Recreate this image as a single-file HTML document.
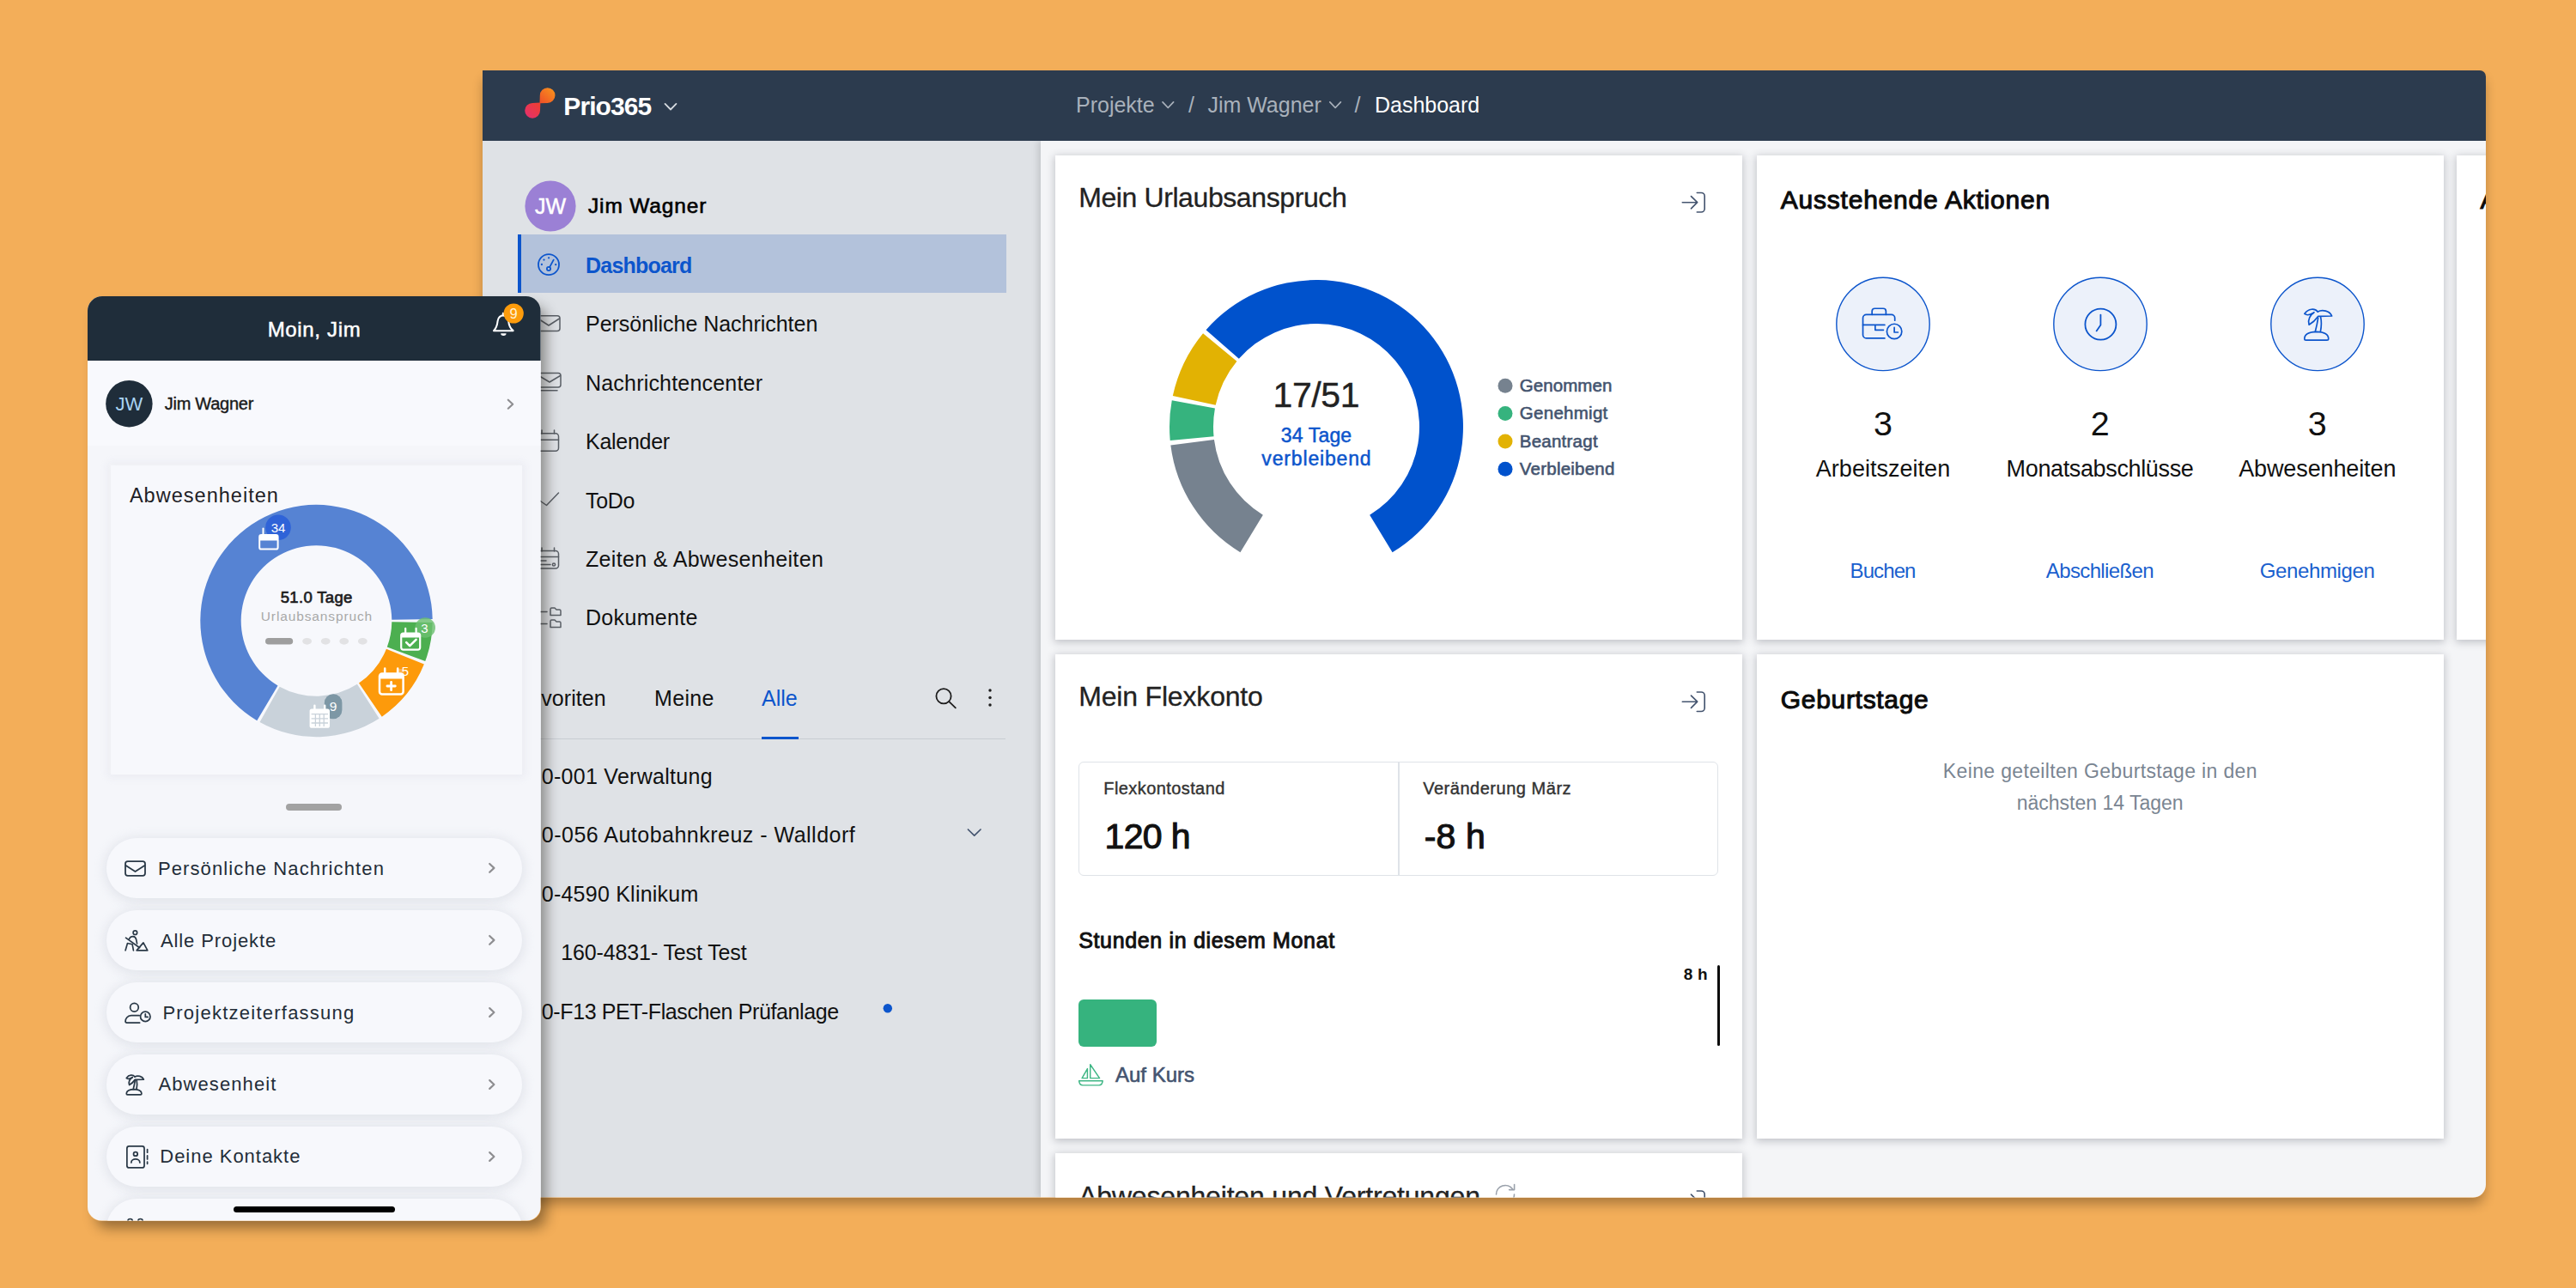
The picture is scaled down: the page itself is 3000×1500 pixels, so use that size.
<!DOCTYPE html>
<html lang="de"><head><meta charset="utf-8"><title>Prio365 Dashboard</title>
<style>
html,body{margin:0;padding:0}
body{width:3000px;height:1500px;overflow:hidden;position:relative;background:#f3ae59;font-family:"Liberation Sans",sans-serif}
.abs,.t,.layer,svg.ov{position:absolute}
.t{white-space:nowrap;line-height:1;display:block}
.layer{left:0;top:0;width:3000px;height:1500px}
svg.ov{left:0;top:0;width:3000px;height:1500px;overflow:visible}
#winshadow{left:562px;top:82px;width:2333px;height:1312.6px;border-radius:0 7px 15px 0;box-shadow:0 9px 14px -2px rgba(20,10,0,.32)}
#win{clip-path:inset(82px 105px 105.4px 562px round 0 7px 15px 0)}
#topbar{left:562px;top:82px;width:2333px;height:81.5px;background:#2c3b4e}
#side{left:562px;top:163.5px;width:650px;height:1231px;background:#dfe2e6}
#content{left:1212px;top:163.5px;width:1683px;height:1231px;background:#f4f5f7;box-shadow:-3px 0 8px rgba(0,0,0,.13)}
.card{background:#fff;box-shadow:0 2px 9px 1px rgba(40,45,58,.25)}
#sel{left:603px;top:273px;width:569px;height:68px;background:#b3c2db;border-left:4px solid #0c55cc;box-sizing:border-box}
#phoneshadow{left:102px;top:345px;width:527.6px;height:1076.5px;border-radius:17px 17px 16px 16px;box-shadow:8px 10px 15px -2px rgba(20,15,5,.42)}
#phone{clip-path:inset(345px 2370.4px 78.5px 102px round 17px 17px 16px 16px)}
#pbg{left:102px;top:345px;width:528px;height:1077px;background:#f5f6fa}
#phead{left:102px;top:345px;width:528px;height:75px;background:#1f2d3a}
#puser{left:102px;top:420px;width:528px;height:99px;background:#f8f9fd}
#pcard{left:128.5px;top:542.2px;width:479.5px;height:359.6px;background:#f7f8fc;box-shadow:0 0 9px 3px rgba(226,228,236,.6),-1px -1px 3px rgba(255,255,255,.8)}
.pill{left:124px;width:483.5px;height:70.6px;border-radius:36px;background:#f7f8fc;box-shadow:0 2px 12px 3px rgba(203,207,218,.42)}
</style></head>
<body>
<div class="abs" id="winshadow"></div>
<div class="layer" id="win">
  <div class="abs" id="side"></div>
  <div class="abs" id="content"></div>
  <div class="abs" id="topbar"></div>
  <div class="abs" id="sel"></div>
  <div class="abs" style="left:629px;top:859.5px;width:542px;height:1.5px;background:#c9cdd3"></div>
  <div class="abs" style="left:886.5px;top:857.5px;width:43px;height:3.5px;background:#0c55cc"></div>
  <div class="abs card" style="left:1229px;top:180.5px;width:800px;height:564px"></div>
  <div class="abs card" style="left:2046px;top:180.5px;width:800px;height:564px"></div>
  <div class="abs card" style="left:2860.8px;top:180.5px;width:800px;height:564px"></div>
  <div class="abs card" style="left:1229px;top:762px;width:800px;height:563.5px"></div>
  <div class="abs card" style="left:2046px;top:762px;width:800px;height:563.5px"></div>
  <div class="abs card" style="left:1229px;top:1343px;width:800px;height:300px"></div>
  <div class="abs" style="left:1256px;top:886.8px;width:745px;height:133px;border:1.5px solid #dfe3e8;border-radius:6px;box-sizing:border-box"></div>
  <div class="abs" style="left:1628.3px;top:887.5px;width:1.5px;height:131.5px;background:#dfe3e8"></div>
  <div class="abs" style="left:1256px;top:1164px;width:90.5px;height:54.5px;border-radius:6px;background:#36b37e"></div>
  <div class="abs" style="left:1999.8px;top:1123.5px;width:3px;height:94px;border-radius:1.5px;background:#0a0a0a"></div>
<svg class="ov" viewBox="0 0 3000 1500" fill="none" stroke-linecap="round" stroke-linejoin="round">
<defs><linearGradient id="lg1" gradientUnits="userSpaceOnUse" x1="645" y1="103" x2="629" y2="120"><stop offset="0" stop-color="#f8931d"/><stop offset="1" stop-color="#ef4f27"/></linearGradient><linearGradient id="lg2" gradientUnits="userSpaceOnUse" x1="629" y1="120" x2="612" y2="137"><stop offset="0" stop-color="#ef3f2e"/><stop offset="1" stop-color="#e42f70"/></linearGradient></defs>
<path d="M628.5,120.3 L628.8,111.05 A8.85,8.85 0 1 1 637.65,119.9 Z" fill="url(#lg1)"/>
<path d="M629.4,119.5 L629,128.8 A8.9,8.9 0 1 1 620.1,119.9 Z" fill="url(#lg2)"/>
<path d="M774.5,120.9 L781.0,127.5 L787.5,120.9" stroke="#d5dae0" stroke-width="1.8"/>
<path d="M1354.0,118.9 L1360.3,125.5 L1366.6,118.9" stroke="#a9b1bb" stroke-width="1.7"/>
<path d="M1548.8,118.9 L1555.1,125.5 L1561.4,118.9" stroke="#a9b1bb" stroke-width="1.7"/>
<circle cx="641" cy="240" r="29.6" fill="#9b80d5"/>
<g stroke="#0c55cc" stroke-width="1.8"><circle cx="639" cy="308.2" r="12"/><circle cx="639" cy="313" r="2.1"/><path d="M640.1,311.1 L644.7,302.6"/></g>
<circle cx="630.9" cy="308" r="1.15" fill="#0c55cc"/>
<circle cx="633.5" cy="302.6" r="1.15" fill="#0c55cc"/>
<circle cx="639.1" cy="300.3" r="1.15" fill="#0c55cc"/>
<circle cx="647.2" cy="308.2" r="1.15" fill="#0c55cc"/>
<g stroke="#5a5f66" stroke-width="1.5">
<rect x="626" y="367.8" width="26" height="17.8" rx="3"/><path d="M626.5,371 L639,379 L651.5,371"/>
<rect x="627" y="434.6" width="26" height="16.3" rx="3"/><path d="M627.5,437.5 L640,445 L652.5,437.5"/><path d="M629,454.8 H649"/>
<rect x="625.5" y="504.7" width="25" height="20.5" rx="3.5"/><path d="M625.5,512.2 H650.5 M631,501 V505 M645.5,501 V505"/>
<path d="M625,580.5 L636.5,588.5 L650.5,574.1"/>
<rect x="625.5" y="641.5" width="25" height="20.6" rx="3.5"/><path d="M625.5,648.5 H650.5 M631,638 V642 M645.5,638 V642 M629,653 H636 M629,657.5 H641"/><circle cx="645" cy="657.5" r="1.6"/>
<path d="M641,716.5 V709.5 a1.5,1.5 0 0 1 1.5,-1.5 H646 l2,2 H651.5 a1.5,1.5 0 0 1 1.5,1.5 V716.5 Z"/>
<path d="M641,730.5 V723.5 a1.5,1.5 0 0 1 1.5,-1.5 H646 l2,2 H651.5 a1.5,1.5 0 0 1 1.5,1.5 V730.5 Z"/>
<path d="M626,712.5 H637 M626,726.5 H637"/>
</g>
<g stroke="#1d1d1d" stroke-width="1.8"><circle cx="1099" cy="810.8" r="8.6"/><path d="M1105.3,817.2 L1112.8,824.4"/></g>
<circle cx="1153" cy="804" r="1.75" fill="#1d1d1d"/>
<circle cx="1153" cy="812.5" r="1.75" fill="#1d1d1d"/>
<circle cx="1153" cy="821" r="1.75" fill="#1d1d1d"/>
<path d="M1127.4,966.0 L1134.7,973.2 L1142.0,966.0" stroke="#44546f" stroke-width="1.7"/>
<circle cx="1033.8" cy="1174.3" r="5.2" fill="#0c55cc"/>
<g transform="translate(0,0)" stroke="#44546f" stroke-width="1.65"><path d="M1959.3,235.7 H1976.3 M1969.5,228.6 L1976.7,235.7 L1969.5,242.8"/><path d="M1976.3,224.5 H1981.2 a4,4 0 0 1 4,4 V243 a4,4 0 0 1 -4,4 H1976.3"/></g>
<g transform="translate(0,581.5)" stroke="#44546f" stroke-width="1.65"><path d="M1959.3,235.7 H1976.3 M1969.5,228.6 L1976.7,235.7 L1969.5,242.8"/><path d="M1976.3,224.5 H1981.2 a4,4 0 0 1 4,4 V243 a4,4 0 0 1 -4,4 H1976.3"/></g>
<g transform="translate(0,1162.5)" stroke="#44546f" stroke-width="1.65"><path d="M1959.3,235.7 H1976.3 M1969.5,228.6 L1976.7,235.7 L1969.5,242.8"/><path d="M1976.3,224.5 H1981.2 a4,4 0 0 1 4,4 V243 a4,4 0 0 1 -4,4 H1976.3"/></g>
<path d="M1444.42,643.27 A171.0,171.0 0 0 1 1363.34,518.38 L1413.94,512.00 A120.0,120.0 0 0 0 1470.84,599.64 Z" fill="#76828f"/>
<path d="M1362.75,513.04 A171.0,171.0 0 0 1 1364.77,466.36 L1414.94,475.50 A120.0,120.0 0 0 0 1413.53,508.26 Z" fill="#36b37e"/>
<path d="M1365.81,461.09 A171.0,171.0 0 0 1 1401.05,388.23 L1440.41,420.67 A120.0,120.0 0 0 0 1415.68,471.80 Z" fill="#e2b203"/>
<path d="M1404.53,384.14 A171.0,171.0 0 1 1 1621.58,643.27 L1595.16,599.64 A120.0,120.0 0 1 0 1442.85,417.80 Z" fill="#0052cc"/>
<circle cx="1753" cy="449.3" r="8.5" fill="#76828f"/>
<circle cx="1753" cy="481.6" r="8.5" fill="#36b37e"/>
<circle cx="1753" cy="513.9" r="8.5" fill="#e2b203"/>
<circle cx="1753" cy="546.2" r="8.5" fill="#0052cc"/>
<circle cx="2193" cy="377.4" r="54.2" fill="#ecf1fa" stroke="#0c55cc" stroke-width="1.4"/>
<circle cx="2446" cy="377.4" r="54.2" fill="#ecf1fa" stroke="#0c55cc" stroke-width="1.4"/>
<circle cx="2699" cy="377.4" r="54.2" fill="#ecf1fa" stroke="#0c55cc" stroke-width="1.4"/>
<g transform="translate(2130,315) scale(0.14752)" stroke="#0c55cc" stroke-width="11.5">
<path d="M440,535 H295 a27,27 0 0 1 -27,-27 V375 a27,27 0 0 1 27,-27 H493 a27,27 0 0 1 27,27 V395"/>
<path d="M340,348 V322 a22,22 0 0 1 22,-22 H428 a22,22 0 0 1 22,22 V348"/>
<path d="M268,430 H440 M365,430 V470 H430"/>
<circle cx="516" cy="481" r="59"/><path d="M516,450 V488 H545"/>
</g>
<g stroke="#0c55cc" stroke-width="1.8"><circle cx="2446.4" cy="377.7" r="18"/><path d="M2446.4,366.6 V378.6 L2441.6,385.4"/></g>
<g transform="translate(2640,320) scale(0.09317)" stroke="#0c55cc" stroke-width="18">
<path d="M470,800 Q470,715 620,712 Q770,715 770,800 Q770,818 750,818 L490,818 Q470,818 470,800 Z"/>
<path d="M605,708 Q628,620 640,540 M670,708 Q690,610 672,528"/>
<path d="M636,462 C600,418 520,418 470,488 C500,512 540,502 580,478"/>
<path d="M590,470 C545,500 505,560 527,625 C570,600 612,560 640,520"/>
<path d="M636,462 C690,432 785,448 812,515 L650,520"/>
</g>
<g transform="translate(1240,1220) scale(0.06988)" stroke="#3fb685" stroke-width="21">
<path d="M425,283 L580,510 H425 Z M378,352 V510 H288 Z"/><path d="M238,556 H632 Q625,625 570,628 H300 Q245,625 238,556 Z"/>
</g>
<g stroke="#9aa1ab" stroke-width="1.6"><path d="M1742.5,1391 a10.5,10.5 0 0 1 19,-6.2"/><path d="M1763.6,1379.6 V1385.6 H1757.6"/><path d="M1763.5,1391 a10.5,10.5 0 0 1 -19,6.2"/></g>
</svg>
<span class="t" style="top:109.25px;font-size:30px;color:#fff;font-weight:700;letter-spacing:-0.918px;left:656.30px;">Prio365</span>
<span class="t" style="top:109.99px;font-size:25px;color:#a9b1bb;left:1253.00px;">Projekte</span>
<span class="t" style="top:109.99px;font-size:25px;color:#a9b1bb;left:1387.40px;transform:translateX(-50%);">/</span>
<span class="t" style="top:109.99px;font-size:25px;color:#a9b1bb;letter-spacing:-0.004px;left:1406.40px;">Jim Wagner</span>
<span class="t" style="top:109.99px;font-size:25px;color:#a9b1bb;left:1581.00px;transform:translateX(-50%);">/</span>
<span class="t" style="top:109.99px;font-size:25px;color:#fff;letter-spacing:-0.014px;left:1601.00px;">Dashboard</span>
<span class="t" style="top:228.49px;font-size:25px;color:#fff;-webkit-text-stroke:0.5px #fff;left:641.00px;transform:translateX(-50%);">JW</span>
<span class="t" style="top:228.03px;font-size:24.5px;color:#000;letter-spacing:0.845px;-webkit-text-stroke:0.6px #000;left:685.00px;">Jim Wagner</span>
<span class="t" style="top:296.69px;font-size:25px;color:#0c55cc;font-weight:700;letter-spacing:-0.787px;left:682.00px;">Dashboard</span>
<span class="t" style="top:364.99px;font-size:25px;color:#111;letter-spacing:-0.031px;left:682.00px;">Pers&ouml;nliche Nachrichten</span>
<span class="t" style="top:433.79px;font-size:25px;color:#111;letter-spacing:0.194px;left:682.00px;">Nachrichtencenter</span>
<span class="t" style="top:502.09px;font-size:25px;color:#111;letter-spacing:-0.268px;left:682.00px;">Kalender</span>
<span class="t" style="top:570.79px;font-size:25px;color:#111;letter-spacing:-0.292px;left:682.00px;">ToDo</span>
<span class="t" style="top:639.09px;font-size:25px;color:#111;letter-spacing:0.341px;left:682.00px;">Zeiten &amp; Abwesenheiten</span>
<span class="t" style="top:707.49px;font-size:25px;color:#111;letter-spacing:0.318px;left:682.00px;">Dokumente</span>
<span class="t" style="top:801.49px;font-size:25px;color:#111;letter-spacing:0.059px;left:630.30px;">voriten</span>
<span class="t" style="top:801.49px;font-size:25px;color:#111;letter-spacing:0.352px;left:762.00px;">Meine</span>
<span class="t" style="top:801.49px;font-size:25px;color:#0c55cc;letter-spacing:-0.029px;left:887.00px;">Alle</span>
<span class="t" style="top:892.19px;font-size:25px;color:#111;letter-spacing:0.280px;left:630.80px;">0-001 Verwaltung</span>
<span class="t" style="top:960.19px;font-size:25px;color:#111;letter-spacing:0.491px;left:630.80px;">0-056 Autobahnkreuz - Walldorf</span>
<span class="t" style="top:1029.29px;font-size:25px;color:#111;letter-spacing:0.231px;left:630.80px;">0-4590 Klinikum</span>
<span class="t" style="top:1097.19px;font-size:25px;color:#111;letter-spacing:-0.132px;left:653.30px;">160-4831- Test Test</span>
<span class="t" style="top:1165.89px;font-size:25px;color:#111;letter-spacing:-0.387px;left:630.80px;">0-F13 PET-Flaschen Pr&uuml;fanlage</span>
<span class="t" style="top:213.77px;font-size:32px;color:#222;letter-spacing:-0.403px;-webkit-text-stroke:0.3px #222;left:1256.20px;">Mein Urlaubsanspruch</span>
<span class="t" style="top:439.97px;font-size:41px;color:#222;letter-spacing:-0.402px;-webkit-text-stroke:0.4px #222;left:1532.80px;transform:translateX(-50%);">17/51</span>
<span class="t" style="top:495.96px;font-size:23px;color:#0c55cc;letter-spacing:0.144px;-webkit-text-stroke:0.5px #0c55cc;left:1533.07px;transform:translateX(-50%);">34 Tage</span>
<span class="t" style="top:523.16px;font-size:23px;color:#0c55cc;letter-spacing:0.838px;-webkit-text-stroke:0.5px #0c55cc;left:1533.42px;transform:translateX(-50%);">verbleibend</span>
<span class="t" style="top:438.99px;font-size:20.5px;color:#44546f;letter-spacing:0.056px;-webkit-text-stroke:0.6px #44546f;left:1769.80px;">Genommen</span>
<span class="t" style="top:471.39px;font-size:20.5px;color:#44546f;letter-spacing:0.277px;-webkit-text-stroke:0.6px #44546f;left:1769.80px;">Genehmigt</span>
<span class="t" style="top:503.59px;font-size:20.5px;color:#44546f;letter-spacing:0.237px;-webkit-text-stroke:0.6px #44546f;left:1769.80px;">Beantragt</span>
<span class="t" style="top:535.79px;font-size:20.5px;color:#44546f;letter-spacing:0.230px;-webkit-text-stroke:0.6px #44546f;left:1769.80px;">Verbleibend</span>
<span class="t" style="top:218.34px;font-size:30px;color:#0c0c0c;letter-spacing:0.775px;-webkit-text-stroke:1.05px #0c0c0c;left:2073.80px;">Ausstehende Aktionen</span>
<span class="t" style="top:474.10px;font-size:39.5px;color:#111;left:2193.00px;transform:translateX(-50%);">3</span>
<span class="t" style="top:474.10px;font-size:39.5px;color:#111;left:2445.70px;transform:translateX(-50%);">2</span>
<span class="t" style="top:474.10px;font-size:39.5px;color:#111;left:2698.80px;transform:translateX(-50%);">3</span>
<span class="t" style="top:532.61px;font-size:27px;color:#111;letter-spacing:0.026px;left:2193.01px;transform:translateX(-50%);">Arbeitszeiten</span>
<span class="t" style="top:532.61px;font-size:27px;color:#111;letter-spacing:-0.362px;left:2445.52px;transform:translateX(-50%);">Monatsabschl&uuml;sse</span>
<span class="t" style="top:532.61px;font-size:27px;color:#111;letter-spacing:-0.120px;left:2698.74px;transform:translateX(-50%);">Abwesenheiten</span>
<span class="t" style="top:653.28px;font-size:24px;color:#1a5fce;letter-spacing:-0.901px;left:2192.55px;transform:translateX(-50%);">Buchen</span>
<span class="t" style="top:653.28px;font-size:24px;color:#1a5fce;letter-spacing:-0.628px;left:2445.39px;transform:translateX(-50%);">Abschlie&szlig;en</span>
<span class="t" style="top:653.28px;font-size:24px;color:#1a5fce;letter-spacing:-0.393px;left:2698.60px;transform:translateX(-50%);">Genehmigen</span>
<span class="t" style="top:218.34px;font-size:30px;color:#0c0c0c;-webkit-text-stroke:1.05px #0c0c0c;left:2888.50px;">A</span>
<span class="t" style="top:795.27px;font-size:32px;color:#222;letter-spacing:-0.176px;-webkit-text-stroke:0.3px #222;left:1256.20px;">Mein Flexkonto</span>
<span class="t" style="top:907.53px;font-size:20px;color:#333;letter-spacing:0.412px;-webkit-text-stroke:0.4px #333;left:1285.30px;">Flexkontostand</span>
<span class="t" style="top:953.57px;font-size:41px;color:#111;letter-spacing:-0.652px;-webkit-text-stroke:1.1px #111;left:1286.50px;">120 h</span>
<span class="t" style="top:907.53px;font-size:20px;color:#333;letter-spacing:0.524px;-webkit-text-stroke:0.4px #333;left:1657.20px;">Ver&auml;nderung M&auml;rz</span>
<span class="t" style="top:953.57px;font-size:41px;color:#111;letter-spacing:0.115px;-webkit-text-stroke:1.1px #111;left:1658.80px;">-8 h</span>
<span class="t" style="top:1082.79px;font-size:25px;color:#111;letter-spacing:0.658px;-webkit-text-stroke:0.95px #111;left:1256.20px;">Stunden in diesem Monat</span>
<span class="t" style="top:1125.42px;font-size:19px;color:#111;font-weight:700;letter-spacing:0.273px;left:1988.97px;transform:translateX(-100%);">8 h</span>
<span class="t" style="top:1239.88px;font-size:24px;color:#44546f;letter-spacing:-0.007px;-webkit-text-stroke:0.6px #44546f;left:1299.00px;">Auf Kurs</span>
<span class="t" style="top:799.95px;font-size:30px;color:#0c0c0c;letter-spacing:0.689px;-webkit-text-stroke:1.05px #0c0c0c;left:2073.80px;">Geburtstage</span>
<span class="t" style="top:886.66px;font-size:23px;color:#7a8592;letter-spacing:0.348px;left:2445.87px;transform:translateX(-50%);">Keine geteilten Geburtstage in den</span>
<span class="t" style="top:923.56px;font-size:23px;color:#7a8592;left:2445.70px;transform:translateX(-50%);">n&auml;chsten 14 Tagen</span>
<span class="t" style="top:1376.67px;font-size:32px;color:#222;letter-spacing:-0.188px;-webkit-text-stroke:0.3px #222;left:1256.20px;">Abwesenheiten und Vertretungen</span>
</div>
<div class="abs" id="phoneshadow"></div>
<div class="layer" id="phone">
  <div class="abs" id="pbg"></div>
  <div class="abs" id="puser"></div>
  <div class="abs" id="phead"></div>
  <div class="abs" id="pcard"></div>
  <div class="abs" style="left:333.3px;top:935.6px;width:64.8px;height:8px;border-radius:4px;background:#a2a2a2"></div>
  <div class="abs pill" style="top:975.5px"></div>
  <div class="abs pill" style="top:1059.5px"></div>
  <div class="abs pill" style="top:1143.6px"></div>
  <div class="abs pill" style="top:1227.6px"></div>
  <div class="abs pill" style="top:1311.6px"></div>
  <div class="abs pill" style="top:1395.7px"></div>
  <div class="abs" style="left:271.7px;top:1405px;width:188.3px;height:6.5px;border-radius:3.5px;background:#000"></div>
<svg class="ov" viewBox="0 0 3000 1500" fill="none" stroke-linecap="round" stroke-linejoin="round">
<g transform="translate(550,345) scale(0.04658)" stroke="#fff" stroke-width="44"><path d="M537,862 C600,800 625,720 635,620 C645,520 720,480 770,480 C820,480 895,520 905,620 C915,720 940,800 1023,862 Z"/><path d="M770,478 V425"/><path d="M712,930 H850 A69,58 0 0 1 712,930 Z" fill="#fff" stroke="none"/></g>
<circle cx="598.2" cy="365" r="11.6" fill="#fd9c0c"/>
<circle cx="150.4" cy="470.2" r="27.2" fill="#1f2d3a"/>
<path d="M591.8,465.7 L597.2,470.7 L591.8,475.7" stroke="#8e8e91" stroke-width="2.2"/>
<path d="M503.69,724.89 A135.2,135.2 0 0 1 495.24,770.07 L450.81,753.57 A87.8,87.8 0 0 0 456.29,724.23 Z" fill="#4caf50"/>
<path d="M493.88,773.60 A135.2,135.2 0 0 1 444.75,834.65 L418.01,795.51 A87.8,87.8 0 0 0 449.92,755.86 Z" fill="#fd9a0b"/>
<path d="M441.60,836.73 A135.2,135.2 0 0 1 302.54,841.02 L325.67,799.64 A87.8,87.8 0 0 0 415.97,796.86 Z" fill="#c9d2da"/>
<path d="M299.27,839.13 A135.2,135.2 0 1 1 503.69,721.11 L456.29,721.77 A87.8,87.8 0 1 0 323.54,798.42 Z" fill="#5683d3"/>
<circle cx="324" cy="614.2" r="14.8" fill="#2f63d8"/>
<circle cx="495.2" cy="731" r="11.8" fill="#6cc070" fill-opacity=".82"/>
<rect x="461.5" y="779" width="9" height="11" rx="3" fill="#fdb85a" fill-opacity=".8"/>
<rect x="377.8" y="808.3" width="20.6" height="29" rx="10.3" fill="#7d97a5"/>
<g stroke="#fff" stroke-width="2"><rect x="302.2" y="623" width="21.4" height="16.6" rx="2.2"/><path d="M306.5,615.5 V622" /></g><path d="M302.2,629.5 V625.2 a2.2,2.2 0 0 1 2.2,-2.2 H321.4 a2.2,2.2 0 0 1 2.2,2.2 V629.5 Z" fill="#fff"/>
<g stroke="#fff" stroke-width="2.2"><rect x="467.2" y="737.5" width="22" height="19.2" rx="2.6"/><path d="M472.2,731.8 V737 M484.6,731.8 V737"/><path d="M473.2,748.2 L477.2,752.2 L484.6,744.8" stroke-width="2.6"/></g><path d="M467.2,742.5 V740 a2.6,2.6 0 0 1 2.6,-2.6 H486.6 a2.6,2.6 0 0 1 2.6,2.6 V742.5 Z" fill="#fff"/>
<g stroke="#fff" stroke-width="2.5"><rect x="442" y="784.5" width="27.6" height="24" rx="3"/><path d="M448.2,778.5 V784 M463.2,778.5 V784"/><path d="M455.6,794.3 V803.7 M450.9,799 H460.3" stroke-width="2.8"/></g><path d="M442,790.6 V787.5 a3,3 0 0 1 3,-3 H466.6 a3,3 0 0 1 3,3 V790.6 Z" fill="#fff"/>
<rect x="360.6" y="825.4" width="23.4" height="22.4" rx="2.6" fill="#fff"/><path d="M366.4,821.6 V826 M378.2,821.6 V826" stroke="#fff" stroke-width="2.4"/>
<g stroke="#c9d2da" stroke-width="1.3" stroke-linecap="butt"><path d="M362.6,831.6 H382 M362.6,836.8 H382 M362.6,842 H382 M367.4,831.6 V846 M372.3,831.6 V846 M377.2,831.6 V846"/></g>
<rect x="309" y="743" width="32.2" height="7.6" rx="3.8" fill="#9e9e9e"/>
<ellipse cx="357.6" cy="746.8" rx="5.4" ry="3.9" fill="#e2e2e4"/>
<ellipse cx="379.2" cy="746.8" rx="5.4" ry="3.9" fill="#e2e2e4"/>
<ellipse cx="400.7" cy="746.8" rx="5.4" ry="3.9" fill="#e2e2e4"/>
<ellipse cx="422.3" cy="746.8" rx="5.4" ry="3.9" fill="#e2e2e4"/>
<g stroke="#2a3947" stroke-width="1.8"><rect x="146" y="1003.2" width="23" height="16.6" rx="2.8"/><path d="M146.6,1008 L157.5,1015 L168.4,1008"/></g>
<g transform="translate(130,990) scale(0.1087)" stroke="#2a3947" stroke-width="15.5"><circle cx="252" cy="885" r="21"/><path d="M152,940 L300,1046"/><path d="M187,953 C207,915 255,917 264,960 L272,1002"/><path d="M148,1075 L170,998 L222,1010 L234,1075"/><path d="M268,1075 L340,992 L385,1075 Z"/></g>
<g transform="translate(130,1150) scale(0.17857)" stroke="#2a3947" stroke-width="9.8"><circle cx="148" cy="130" r="27"/><path d="M180,183 H128 C102,183 90,205 90,221 Q90,230 100,230 H183"/><circle cx="220" cy="190" r="32"/><path d="M220,173 V193 H236"/></g>
<g transform="translate(119.75,1226.9) scale(0.0586)" stroke="#2a3947" stroke-width="30"><path d="M470,800 Q470,715 620,712 Q770,715 770,800 Q770,818 750,818 L490,818 Q470,818 470,800 Z"/><path d="M605,708 Q628,620 640,540 M670,708 Q690,610 672,528"/><path d="M636,462 C600,418 520,418 470,488 C500,512 540,502 580,478"/><path d="M590,470 C545,500 505,560 527,625 C570,600 612,560 640,520"/><path d="M636,462 C690,432 785,448 812,515 L650,520"/></g>
<g transform="translate(130,1150) scale(0.17857)" stroke="#2a3947" stroke-width="9.8"><rect x="100" y="1036" width="113" height="140" rx="14"/><circle cx="156" cy="1086" r="13"/><path d="M128,1142 C128,1112 184,1112 184,1142"/><path d="M233,1056 V1076 M233,1097 V1120 M233,1138 V1150"/></g>
<path d="M570.2,1006.0 L575.4,1010.9 L570.2,1015.8" stroke="#8e8e91" stroke-width="2.2"/>
<path d="M570.2,1090.0 L575.4,1094.9 L570.2,1099.8" stroke="#8e8e91" stroke-width="2.2"/>
<path d="M570.2,1174.1 L575.4,1179.0 L570.2,1183.9" stroke="#8e8e91" stroke-width="2.2"/>
<path d="M570.2,1258.1 L575.4,1263.0 L570.2,1267.9" stroke="#8e8e91" stroke-width="2.2"/>
<path d="M570.2,1342.1 L575.4,1347.0 L570.2,1351.9" stroke="#8e8e91" stroke-width="2.2"/>
<g stroke="#2a3947" stroke-width="1.6"><circle cx="151.6" cy="1422.2" r="2.7"/><circle cx="163.5" cy="1422.2" r="2.7"/></g>
</svg>
<span class="t" style="top:371.58px;font-size:24px;color:#fff;letter-spacing:0.664px;-webkit-text-stroke:0.5px #fff;left:366.03px;transform:translateX(-50%);">Moin, Jim</span>
<span class="t" style="top:356.64px;font-size:16.5px;color:#fff3d8;left:598.20px;transform:translateX(-50%);">9</span>
<span class="t" style="top:459.75px;font-size:22px;color:#a9d3f3;left:150.40px;transform:translateX(-50%);">JW</span>
<span class="t" style="top:460.23px;font-size:20px;color:#1a1a1a;letter-spacing:-0.250px;-webkit-text-stroke:0.4px #1a1a1a;left:191.70px;">Jim Wagner</span>
<span class="t" style="top:566.02px;font-size:23.5px;color:#1e2126;letter-spacing:1.025px;left:150.90px;">Abwesenheiten</span>
<span class="t" style="top:687.46px;font-size:18.5px;color:#1c1c1e;letter-spacing:0.345px;-webkit-text-stroke:0.7px #1c1c1e;left:368.67px;transform:translateX(-50%);">51.0 Tage</span>
<span class="t" style="top:710.03px;font-size:15.5px;color:#a8a8a8;letter-spacing:0.872px;left:368.94px;transform:translateX(-50%);">Urlaubsanspruch</span>
<span class="t" style="top:1000.95px;font-size:22px;color:#232d38;letter-spacing:1.115px;left:183.90px;">Pers&ouml;nliche Nachrichten</span>
<span class="t" style="top:1085.25px;font-size:22px;color:#232d38;letter-spacing:0.890px;left:187.00px;">Alle Projekte</span>
<span class="t" style="top:1168.55px;font-size:22px;color:#232d38;letter-spacing:1.241px;left:189.40px;">Projektzeiterfassung</span>
<span class="t" style="top:1252.45px;font-size:22px;color:#232d38;letter-spacing:1.102px;left:184.40px;">Abwesenheit</span>
<span class="t" style="top:1335.95px;font-size:22px;color:#232d38;letter-spacing:0.974px;left:186.30px;">Deine Kontakte</span>
<span class="t" style="top:607.17px;font-size:15px;color:#fff;left:324.00px;transform:translateX(-50%);">34</span>
<span class="t" style="top:724.17px;font-size:15px;color:#fff;left:494.50px;transform:translateX(-50%);">3</span>
<span class="t" style="top:773.67px;font-size:15px;color:#fff;left:472.00px;transform:translateX(-50%);">5</span>
<span class="t" style="top:815.13px;font-size:15.5px;color:#fff;left:388.00px;transform:translateX(-50%);">9</span>
</div>
</body></html>
